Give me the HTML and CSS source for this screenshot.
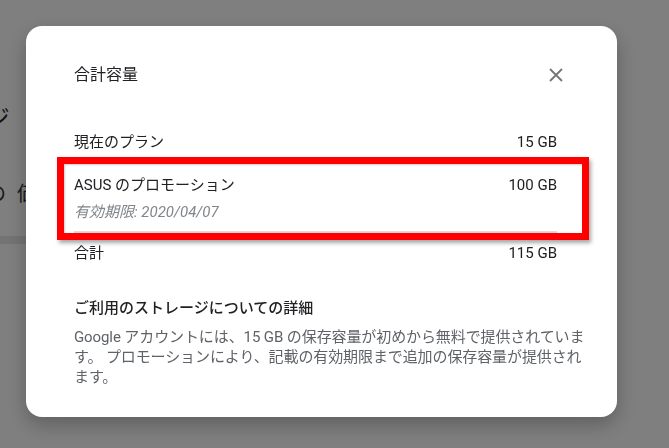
FILE: index.html
```html
<!DOCTYPE html>
<html lang="ja">
<head>
    <meta charset="utf-8">
    <title>合計容量</title>
    <link rel="stylesheet" href="styles.css">
</head>
<body>
    <div class="page">
        <div class="page-title">ストレージ</div>
        <div class="page-line">の 価格</div>
        <div class="page-bar"></div>
    </div>
    <div class="overlay">
        <div class="dialog">
            <div class="dialog-header">
                <div class="dialog-title">合計容量</div>
                <div class="close-button">
                    <svg width="14" height="14" viewBox="0 0 14 14"><path d="M1 1L13 13M13 1L1 13" stroke="#757575" stroke-width="1.8"/></svg>
                </div>
            </div>
            <div class="rows">
                <div class="row">
                    <span>現在のプラン</span>
                    <span>15 GB</span>
                </div>
                <div class="row row-promo">
                    <span>ASUS のプロモーション</span>
                    <span>100 GB</span>
                </div>
                <div class="row-sub">有効期限: 2020/04/07</div>
                <div class="divider"></div>
                <div class="row row-total">
                    <span>合計</span>
                    <span>115 GB</span>
                </div>
            </div>
            <div class="details-title">ご利用のストレージについての詳細</div>
            <div class="details-text">Google アカウントには、15 GB の保存容量が初めから無料で提供されています。 プロモーションにより、記載の有効期限まで追加の保存容量が提供されます。</div>
            <div class="highlight"></div>
        </div>
    </div>
</body>
</html>
```

FILE: styles.css
```css
body {
    margin: 0;
    font-family: Roboto, "Noto Sans CJK JP", sans-serif;
    background-color: #fff;
    color: #202124;
    overflow: hidden;
}
.page {
    height: 448px;
    padding-top: 104px;
    box-sizing: border-box;
}
.page-title {
    font-size: 22px;
    line-height: 28px;
    margin-left: -100px;
}
.page-line {
    font-size: 20px;
    line-height: 28px;
    margin-top: 48px;
    margin-left: -14px;
    word-spacing: 6px;
    color: #333;
}
.page-bar {
    width: 300px;
    height: 8px;
    margin-top: 28px;
    background-color: #e8e8e8;
}
.overlay {
    position: fixed;
    top: 0;
    left: 0;
    right: 0;
    bottom: 0;
    background-color: rgba(0, 0, 0, 0.5);
    padding: 26px;
}
.dialog {
    position: relative;
    width: 591px;
    height: 391px;
    box-sizing: border-box;
    padding: 37px 30px 30px 48px;
    background-color: #fff;
    border-radius: 16px;
    box-shadow: 0 8px 20px rgba(0, 0, 0, 0.25);
}
.dialog-header {
    display: flex;
    align-items: center;
    justify-content: space-between;
}
.dialog-title {
    font-size: 16px;
    line-height: 24px;
}
.close-button {
    width: 24px;
    height: 24px;
    margin-right: 19px;
    display: flex;
    align-items: center;
    justify-content: center;
}
.rows {
    margin-top: 45px;
    margin-right: 30px;
}
.row {
    display: flex;
    justify-content: space-between;
    font-size: 15px;
    line-height: 20px;
}
.row-promo {
    margin-top: 23px;
}
.row-sub {
    margin-top: 7px;
    font-size: 15px;
    line-height: 20px;
    font-style: italic;
    color: #80868b;
}
.divider {
    margin-top: 9px;
    height: 2px;
    background-color: #dadce0;
}
.row-total {
    margin-top: 10px;
}
.details-title {
    margin-top: 35px;
    font-size: 15px;
    line-height: 20px;
    font-weight: 500;
}
.details-text {
    margin-top: 9px;
    font-size: 15px;
    line-height: 20px;
    letter-spacing: -0.1px;
    color: #5f6368;
}
.highlight {
    position: absolute;
    left: 31px;
    top: 131px;
    width: 532px;
    height: 83px;
    box-sizing: border-box;
    border: 7px solid #ff0000;
    box-shadow: 2px 3px 4px rgba(0, 0, 0, 0.35), inset 1px 1px 2px rgba(0, 0, 0, 0.2);
}
```
